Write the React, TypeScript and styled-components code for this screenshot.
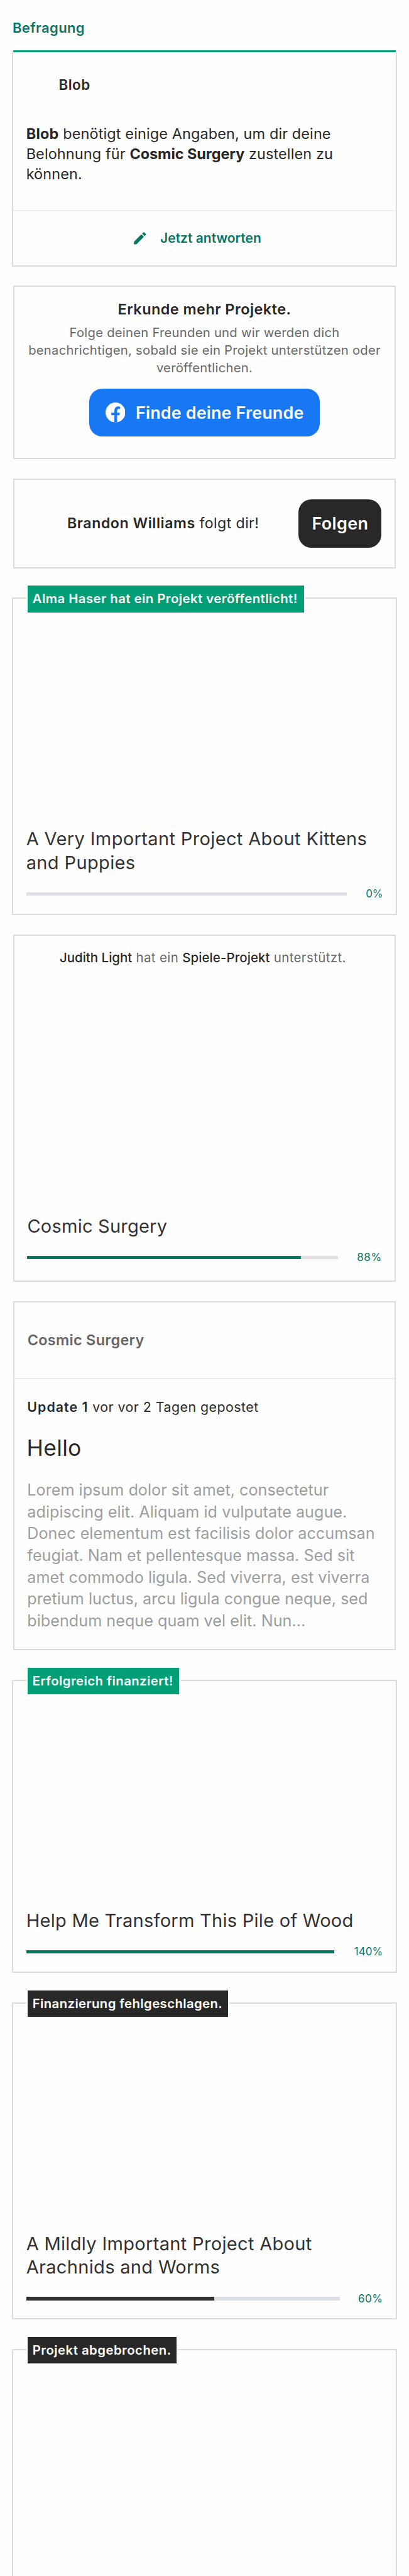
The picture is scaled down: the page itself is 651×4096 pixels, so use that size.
import React from 'react';
import styled, { createGlobalStyle } from 'styled-components';
import { MdEdit } from 'react-icons/md';

const SCALE = 0.868;
const u = (n: number) => `${+(n * SCALE).toFixed(3)}px`;

const color = {
  ink: '#282828',
  title: '#323232',
  muted: '#656969',
  faded: '#9b9e9e',
  green: '#029f76',
  deepGreen: '#077664',
  line: '#dcdcdd',
  softLine: '#ededf2',
  track: '#dcdee8',
  facebook: '#1877f2',
  page: '#fefefe',
};

const GlobalStyle = createGlobalStyle`
  *, *::before, *::after { box-sizing: border-box; }
  body {
    margin: 0;
    background: ${color.page};
    color: ${color.ink};
    font-family: Inter, 'Liberation Sans', sans-serif;
  }
`;

type Tracking = { $ls?: number };
const tracking = (p: Tracking) => `${p.$ls ?? 0}px`;

const Page = styled.main`
  width: 651px;
  height: 4096px;
  overflow: hidden;
  display: flex;
  flex-direction: column;
  align-items: center;
  padding-top: ${u(35.7)};
`;

const SectionLabel = styled.h2`
  align-self: flex-start;
  margin: 0 0 ${u(26.3)} ${u(23)};
  font-size: ${u(25.4)};
  line-height: ${u(32)};
  font-weight: 600;
  color: ${color.deepGreen};
  letter-spacing: 0.348px;
`;

const Card = styled.section<{ $h: number; $wide?: boolean; $mt?: number }>`
  flex: none;
  position: relative;
  display: flex;
  flex-direction: column;
  width: ${(p) => u(p.$wide ? 706 : 702)};
  height: ${(p) => u(p.$h)};
  margin-top: ${(p) => u(p.$mt ?? 0)};
  border: 2px solid ${color.line};
  white-space: nowrap;
`;

const SurveyCard = styled(Card)`
  border-top: none;
`;

const AccentBar = styled.div`
  flex: none;
  height: ${u(4)};
  margin-top: ${u(-2)};
  background: ${color.green};
`;

const AuthorRow = styled.header`
  display: flex;
  align-items: center;
  gap: ${u(11.5)};
  padding: ${u(35.5)} ${u(24)} 0;
`;

const Avatar = styled.span<{ $size: number }>`
  flex: none;
  width: ${(p) => u(p.$size)};
  height: ${(p) => u(p.$size)};
  border-radius: 50%;
`;

const AuthorName = styled.span`
  font-size: ${u(25.8)};
  line-height: ${u(32)};
  font-weight: 600;
  letter-spacing: 0.45px;
`;

const SurveyText = styled.p`
  flex: 1;
  margin: ${u(47.2)} 0 0;
  padding: 0 ${u(23.7)};
  font-size: ${u(27)};
  line-height: ${u(37)};
  letter-spacing: 0.13px;
`;

const Strong = styled.b<{ $ls?: number; $weight?: number }>`
  font-weight: ${(p) => p.$weight ?? 600};
  color: ${color.ink};
  letter-spacing: ${tracking};
`;

const AnswerButton = styled.button`
  display: flex;
  align-items: center;
  justify-content: center;
  gap: ${u(22.5)};
  height: ${u(102)};
  padding: 0 ${u(29)} ${u(1)} 0;
  border: none;
  border-top: 2px solid ${color.softLine};
  background: none;
  color: ${color.deepGreen};
  font: 600 ${u(24.2)} / ${u(32)} Inter, sans-serif;
  letter-spacing: 0.017px;
`;

const PencilIcon = styled(MdEdit)`
  width: ${u(29.5)};
  height: ${u(29.5)};
`;

const FriendsCard = styled(Card)`
  align-items: center;
  text-align: center;
`;

const FriendsTitle = styled.h3`
  margin: ${u(22.6)} 0 0;
  font-size: ${u(27)};
  line-height: ${u(36)};
  font-weight: 600;
  letter-spacing: 0.469px;
`;

const FriendsText = styled.p`
  margin: ${u(9.8)} 0 ${u(22.2)};
  font-size: ${u(23.3)};
  line-height: ${u(32)};
  color: ${color.muted};
  letter-spacing: 0.264px;
`;

const Button = styled.button<{ $w: number; $bg: string } & Tracking>`
  flex: none;
  display: flex;
  align-items: center;
  justify-content: center;
  gap: ${u(19.5)};
  width: ${(p) => u(p.$w)};
  height: ${u(88)};
  padding: 0;
  border: none;
  border-radius: ${u(24)};
  background: ${(p) => p.$bg};
  color: #fff;
  font: 600 ${u(31)} / ${u(40)} Inter, sans-serif;
  letter-spacing: ${tracking};
`;

const FacebookMark = styled.svg`
  width: ${u(36.4)};
  height: ${u(36.4)};
`;

const FollowCard = styled(Card)`
  flex-direction: row;
  align-items: center;
  justify-content: space-between;
  padding: 0 ${u(24)} 0 ${u(22)};
`;

const FollowInfo = styled.div`
  display: flex;
  align-items: center;
  gap: ${u(15)};
`;

const FollowText = styled.span`
  font-size: ${u(26.7)};
  line-height: ${u(36)};
  letter-spacing: 0.39px;
`;

const Badge = styled.span<{ $bg: string; $w: number } & Tracking>`
  position: absolute;
  top: calc(${u(-22)} - 2px);
  left: calc(${u(28.2)} - 2px);
  width: ${(p) => u(p.$w)};
  height: ${u(49)};
  padding-left: ${u(9.4)};
  background: ${(p) => p.$bg};
  box-shadow: 0 0 0 2px ${color.page};
  color: #fff;
  font-size: ${u(23.4)};
  line-height: ${u(49)};
  font-weight: 600;
  letter-spacing: ${tracking};
`;

const ProjectBody = styled.div<{ $bottom: number }>`
  flex: 1;
  display: flex;
  flex-direction: column;
  justify-content: flex-end;
  padding: 0 calc(${u(26)} - 2px) calc(${(p) => u(p.$bottom)} - 2px);
`;

const ProjectTitle = styled.h3<Tracking>`
  margin: 0 0 ${u(24)};
  font-size: ${u(33.5)};
  line-height: ${u(43.2)};
  font-weight: 400;
  color: ${color.title};
  letter-spacing: ${tracking};
`;

const ProgressRow = styled.div`
  display: flex;
  align-items: center;
  height: ${u(24)};
`;

const Track = styled.div<{ $w: number }>`
  width: ${(p) => u(p.$w)};
  height: ${u(6)};
  background: ${color.track};
`;

const Fill = styled.div<{ $bg: string }>`
  height: 100%;
  background: ${(p) => p.$bg};
`;

const Percent = styled.span<Tracking>`
  margin-left: auto;
  font-size: ${u(19.6)};
  line-height: ${u(24)};
  color: ${color.deepGreen};
  letter-spacing: ${tracking};
`;

const BackedText = styled.p`
  margin: ${u(24.3)} 0 0;
  padding-right: ${u(6)};
  text-align: center;
  font-size: ${u(23.6)};
  line-height: ${u(32)};
  color: ${color.muted};
  letter-spacing: 0.38px;
`;

const UpdateHeader = styled.header`
  flex: none;
  display: flex;
  align-items: center;
  height: ${u(140)};
  padding: 0 ${u(24)};
  border-bottom: 2px solid ${color.softLine};
  font-size: ${u(27)};
  font-weight: 600;
  color: #656469;
  letter-spacing: 0.324px;
`;

const UpdateBody = styled.div`
  display: flex;
  flex-direction: column;
  padding: ${u(35.5)} ${u(23.6)} 0;
`;

const UpdateMeta = styled.p`
  margin: 0;
  font-size: ${u(24.6)};
  line-height: ${u(32)};
  letter-spacing: 0.48px;
`;

const UpdateTitle = styled.h3`
  margin: ${u(35.4)} 0 0 ${u(-1)};
  font-size: ${u(41)};
  line-height: ${u(48)};
  font-weight: 400;
  letter-spacing: 0.304px;
`;

const UpdateText = styled.p`
  margin: ${u(32.5)} 0 0;
  font-size: ${u(29)};
  line-height: ${u(40)};
  color: ${color.faded};
  letter-spacing: 0.02px;
`;

function FacebookIcon() {
  return (
    <FacebookMark viewBox="0 0 109 109">
      <circle cx="54.5" cy="54.5" r="54.5" fill="#fff" />
      <path
        fill={color.facebook}
        d="M48.5 109V70H32V56h16.500V46C48.500 29 56 21.500 71 21.500q4.500 0 8.500 1V35.500q-2.500-.5-6-.5C66 35 63.500 38 63.500 45V56H79L76.500 70H63.500V109Z"
      />
    </FacebookMark>
  );
}

type ProjectProps = {
  lines: string[];
  titleLs: number;
  percent: number;
  percentLs: number;
  track: number;
  fill?: string;
  bottom?: number;
};

function ProjectSummary({ lines, titleLs, percent, percentLs, track, fill = color.deepGreen, bottom = 26 }: ProjectProps) {
  return (
    <ProjectBody $bottom={bottom}>
      <ProjectTitle $ls={titleLs}>
        {lines.map((line, i) => (
          <React.Fragment key={line}>
            {i > 0 && <br />}
            {line}
          </React.Fragment>
        ))}
      </ProjectTitle>
      <ProgressRow>
        <Track $w={track}>
          <Fill $bg={fill} style={{ width: `${Math.min(percent, 100)}%` }} />
        </Track>
        <Percent $ls={percentLs}>{percent}%</Percent>
      </ProgressRow>
    </ProjectBody>
  );
}

export default function App() {
  return (
    <>
      <GlobalStyle />
      <Page>
        <SectionLabel>Befragung</SectionLabel>

        <SurveyCard $wide $h={395}>
          <AccentBar />
          <AuthorRow>
            <Avatar $size={48} />
            <AuthorName>Blob</AuthorName>
          </AuthorRow>
          <SurveyText>
            <Strong $weight={700} $ls={0.25}>Blob</Strong> benötigt einige Angaben, um dir deine
            <br />
            Belohnung für <Strong $weight={700} $ls={-0.05}>Cosmic Surgery</Strong> zustellen zu
            <br />
            können.
          </SurveyText>
          <AnswerButton>
            <PencilIcon />
            Jetzt antworten
          </AnswerButton>
        </SurveyCard>

        <FriendsCard $h={318} $mt={34}>
          <FriendsTitle>Erkunde mehr Projekte.</FriendsTitle>
          <FriendsText>
            Folge deinen Freunden und wir werden dich
            <br />
            benachrichtigen, sobald sie ein Projekt unterstützen oder
            <br />
            veröffentlichen.
          </FriendsText>
          <Button $w={422} $bg={color.facebook} $ls={0.16}>
            <FacebookIcon />
            Finde deine Freunde
          </Button>
        </FriendsCard>

        <FollowCard $h={164} $mt={36}>
          <FollowInfo>
            <Avatar $size={60} />
            <FollowText>
              <Strong $ls={0.54}>Brandon Williams</Strong> folgt dir!
            </FollowText>
          </FollowInfo>
          <Button $w={152} $bg={color.ink} $ls={0.4}>
            Folgen
          </Button>
        </FollowCard>

        <Card $wide $h={581} $mt={54}>
          <Badge $bg={color.green} $w={507} $ls={0.48}>Alma Haser hat ein Projekt veröffentlicht!</Badge>
          <ProjectSummary
            lines={['A Very Important Project About Kittens', 'and Puppies']}
            titleLs={0.34}
            percent={0}
            percentLs={-0.2}
            track={588}
          />
        </Card>

        <Card $h={636} $mt={36}>
          <BackedText>
            <Strong $weight={500}>Judith Light</Strong> hat ein <Strong $weight={500} $ls={0.07}>Spiele-Projekt</Strong>{' '}
            unterstützt.
          </BackedText>
          <ProjectSummary
            lines={['Cosmic Surgery']}
            titleLs={0.2}
            percent={88}
            percentLs={0.5}
            track={570}
            bottom={32}
          />
        </Card>

        <Card $h={639} $mt={36}>
          <UpdateHeader>Cosmic Surgery</UpdateHeader>
          <UpdateBody>
            <UpdateMeta>
              <Strong $ls={1.05}>Update 1</Strong> vor vor 2 Tagen gepostet
            </UpdateMeta>
            <UpdateTitle>Hello</UpdateTitle>
            <UpdateText>
              Lorem ipsum dolor sit amet, consectetur
              <br />
              adipiscing elit. Aliquam id vulputate augue.
              <br />
              Donec elementum est facilisis dolor accumsan
              <br />
              feugiat. Nam et pellentesque massa. Sed sit
              <br />
              amet commodo ligula. Sed viverra, est viverra
              <br />
              pretium luctus, arcu ligula congue neque, sed
              <br />
              bibendum neque quam vel elit. Nun…
            </UpdateText>
          </UpdateBody>
        </Card>

        <Card $wide $h={537} $mt={54}>
          <Badge $bg={color.green} $w={278} $ls={0.46}>Erfolgreich finanziert!</Badge>
          <ProjectSummary
            lines={['Help Me Transform This Pile of Wood']}
            titleLs={0.238}
            percent={140}
            percentLs={0.07}
            track={565}
          />
        </Card>

        <Card $wide $h={581} $mt={54}>
          <Badge $bg={color.ink} $w={368} $ls={0.41}>Finanzierung fehlgeschlagen.</Badge>
          <ProjectSummary
            lines={['A Mildly Important Project About', 'Arachnids and Worms']}
            titleLs={0.298}
            percent={60}
            percentLs={0.42}
            track={575}
            fill={color.title}
          />
        </Card>

        <Card $wide $h={581} $mt={54}>
          <Badge $bg={color.ink} $w={274} $ls={0.5}>Projekt abgebrochen.</Badge>
        </Card>
      </Page>
    </>
  );
}
